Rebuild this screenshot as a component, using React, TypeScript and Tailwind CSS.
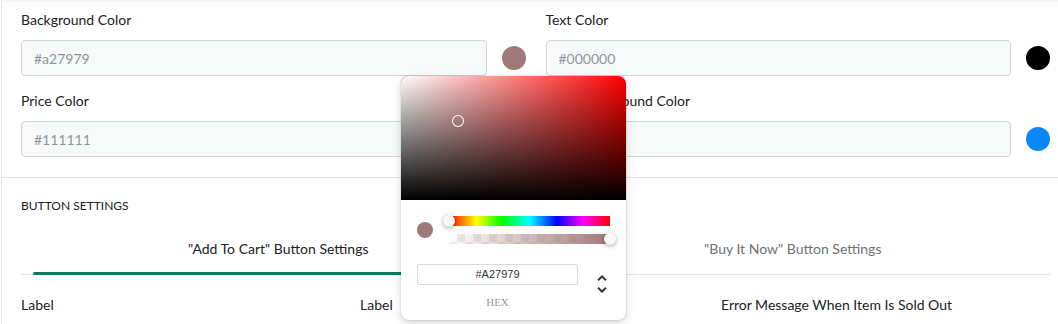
import React from 'react';

function ColorField({ label, value, swatch }: { label: string; value: string; swatch: string }) {
  return (
    <div>
      <label className="block text-[14px] leading-5 mb-[10px]">{label}</label>
      <div className="flex items-center gap-[15px]">
        <input
          readOnly
          value={value}
          className="flex-1 min-w-0 h-[36px] px-3 rounded-[4px] border border-[#d2d5d8] bg-[#f8f9f9] text-[14px] text-[#8f959a] outline-none font-['Lato',sans-serif]"
        />
        <span className={`w-6 h-6 rounded-full shrink-0 ${swatch}`} />
      </div>
    </div>
  );
}

function ChromePicker() {
  return (
    <div className="absolute left-[401px] top-[76px] w-[225px] bg-white rounded-lg overflow-hidden shadow-[0_0_2px_rgba(0,0,0,0.2),0_4px_10px_rgba(0,0,0,0.15)]">
      {/* saturation */}
      <div className="relative h-[124px] bg-[#ff0000]">
        <div className="absolute inset-0 bg-[linear-gradient(to_right,#fff,rgba(255,255,255,0))]" />
        <div className="absolute inset-0 bg-[linear-gradient(to_top,#000,rgba(0,0,0,0))]" />
        <div className="absolute left-[51px] top-[39px] w-3 h-3 rounded-full shadow-[inset_0_0_0_1px_#fff]" />
      </div>

      <div className="px-4 pt-4 pb-3">
        <div className="flex">
          <div className="w-8">
            <div className="mt-[6px] w-4 h-4 rounded-full bg-[#a27979]" />
          </div>
          <div className="flex-1">
            <div className="relative h-[10px] mb-2 bg-[linear-gradient(to_right,#f00_0%,#ff0_17%,#0f0_33%,#0ff_50%,#00f_67%,#f0f_83%,#f00_100%)]">
              <div className="absolute left-[-6px] top-[-1px] w-3 h-3 rounded-full bg-[#f8f8f8] shadow-[0_1px_4px_0_rgba(0,0,0,0.37)]" />
            </div>
            <div className="relative h-[10px] bg-[conic-gradient(rgba(0,0,0,0.08)_25%,transparent_0_50%,rgba(0,0,0,0.08)_0_75%,transparent_0)] bg-[length:16px_16px]">
              <div className="absolute inset-0 bg-[linear-gradient(to_right,rgba(162,121,121,0),rgb(162,121,121))]" />
              <div className="absolute right-[-6px] top-[-1px] w-3 h-3 rounded-full bg-[#f8f8f8] shadow-[0_1px_4px_0_rgba(0,0,0,0.37)]" />
            </div>
          </div>
        </div>

        <div className="flex pt-4">
          <div className="flex-1">
            <input
              readOnly
              value="#A27979"
              className="w-full h-[21px] rounded-[2px] shadow-[inset_0_0_0_1px_#dadada] text-center text-[11px] text-[#333] outline-none font-['Liberation_Sans',sans-serif]"
            />
            <div className="mt-3 text-center text-[11px] leading-[11px] uppercase text-[#969696] font-['Liberation_Serif',serif]">
              hex
            </div>
          </div>
          <div className="w-8 flex justify-end">
            <svg viewBox="0 0 24 24" className="w-6 h-6 mt-3 mr-[-4px]">
              <path
                fill="#333"
                d="M12,18.17L8.83,15L7.42,16.41L12,21L16.59,16.41L15.17,15M12,5.83L15.17,9L16.58,7.59L12,3L7.41,7.59L8.83,9L12,5.83Z"
              />
            </svg>
          </div>
        </div>
      </div>
    </div>
  );
}

export default function App() {
  return (
    <div className="relative w-[1058px] h-[324px] overflow-hidden bg-white font-['Lato',sans-serif] text-[#202223]">
      <div className="h-full ml-px border-l border-[#e1e3e5] shadow-[inset_0_3px_3px_-2px_rgba(0,0,0,0.07)]">
        <section className="pl-[19px] pr-2 pt-[10px] pb-5 border-b border-[#e1e3e5]">
          <div className="grid grid-cols-2 gap-x-5 gap-y-[15px]">
            <ColorField label="Background Color" value="#a27979" swatch="bg-[#a27979]" />
            <ColorField label="Text Color" value="#000000" swatch="bg-black" />
            <ColorField label="Price Color" value="#111111" swatch="bg-[#111111]" />
            <ColorField label="Price Background Color" value="#0a88fc" swatch="bg-[#0a88fc]" />
          </div>
        </section>

        <section className="pl-[19px] pr-2 pt-5">
          <h3 className="text-[12px] leading-4 uppercase">Button Settings</h3>

          <div className="grid grid-cols-2 border-b border-[#e1e3e5]">
            <button className="relative pt-[25px] pb-[15px] text-[14px] leading-5 text-[#202223]">
              "Add To Cart" Button Settings
              <span className="absolute left-3 right-3 bottom-[-1px] h-[3px] rounded-[2px] bg-[#008060]" />
            </button>
            <button className="relative pt-[25px] pb-[15px] text-[14px] leading-5 text-[#6d7175]">
              "Buy It Now" Button Settings
            </button>
          </div>

          <div className="grid grid-cols-[339px_361px_1fr] pt-5 text-[14px] leading-5">
            <label>Label</label>
            <label>Label</label>
            <label>Error Message When Item Is Sold Out</label>
          </div>
        </section>
      </div>

      <ChromePicker />
    </div>
  );
}
